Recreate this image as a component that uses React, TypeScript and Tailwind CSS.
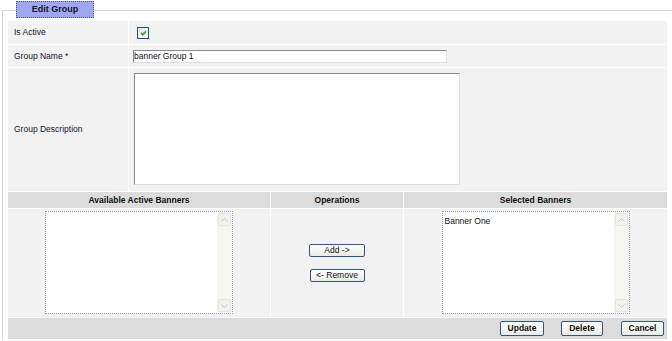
import React from "react";

const font = { fontFamily: '"Liberation Sans", Arial, sans-serif' };

function Arrow({ dir }: { dir: "up" | "down" }) {
  return (
    <div className="w-[13px] h-[13px] rounded-[2px] border border-[#e6e4dc] bg-[#f3f2ec] flex items-center justify-center">
      <svg width="7" height="4" viewBox="0 0 7 4">
        <polyline
          points={dir === "up" ? "0.5,3.5 3.5,0.5 6.5,3.5" : "0.5,0.5 3.5,3.5 6.5,0.5"}
          fill="none"
          stroke="#c9c7bd"
          strokeWidth="1"
        />
      </svg>
    </div>
  );
}

function ListBox({ items }: { items: string[] }) {
  return (
    <div className="w-[188px] h-[103px] border border-dotted border-[#8fa7c4] bg-white flex">
      <div className="flex-1 pl-[2px] pt-[3px] text-[8.5px] text-[#111]">
        {items.map((it) => (
          <div key={it}>{it}</div>
        ))}
      </div>
      <div className="w-[15px] bg-[#f6f5f0] flex flex-col justify-between items-center py-px">
        <Arrow dir="up" />
        <Arrow dir="down" />
      </div>
    </div>
  );
}

function Btn({ label, w, bold }: { label: string; w: string; bold?: boolean }) {
  return (
    <button
      className={`${w} ${bold ? "h-[15px] font-bold" : "h-[13px]"} rounded-[2px] border border-[#37577a] bg-gradient-to-b from-white to-[#eceae4] text-[8.5px] leading-none text-[#111] flex items-center justify-center`}
    >
      {label}
    </button>
  );
}

export default function App() {
  return (
    <div className="w-[672px] h-[341px] bg-white overflow-hidden text-[#14142a]" style={font}>
      {/* tab */}
      <div className="relative z-10 ml-[16px] mt-[1px] w-[78px] h-[17px] bg-[#9fa7ef] border border-dotted border-[#55588a] flex items-center justify-center text-[9px] font-bold text-[#14142a]">
        Edit Group
      </div>

      <div className="ml-[2px] -mt-[8px] border-l border-t border-[#d6d6d6] pl-[5px] pt-[10px] pr-[5px] h-[330px]">
        <div className="flex flex-col gap-px">
          <div className="grid grid-cols-[120px_1fr] gap-px h-[23px]">
            <div className="bg-[#f2f2f2] flex items-center pl-[6px] text-[8.5px]">Is Active</div>
            <div className="bg-[#f2f2f2] flex items-center pl-[8px]">
              <div className="w-[12px] h-[12px] border border-[#1c5180] bg-gradient-to-br from-[#e4e4dc] to-white flex items-center justify-center">
                <svg width="7" height="6" viewBox="0 0 7 6">
                  <polyline points="1,3 2.8,4.8 6,1.2" fill="none" stroke="#21a121" strokeWidth="1.6" />
                </svg>
              </div>
            </div>
          </div>

          <div className="grid grid-cols-[120px_1fr] gap-px h-[22px]">
            <div className="bg-[#f2f2f2] flex items-center pl-[6px] text-[8.5px]">Group Name *</div>
            <div className="bg-[#f2f2f2] flex items-center pl-[4px]">
              <div className="w-[314px] h-[13px] bg-white border border-t-[#8a8a8a] border-l-[#8a8a8a] border-b-[#dedede] border-r-[#dedede] text-[8.5px] leading-[11px] text-[#111]">
                banner Group 1
              </div>
            </div>
          </div>

          <div className="grid grid-cols-[120px_1fr] gap-px h-[123px]">
            <div className="bg-[#f2f2f2] flex items-center pl-[6px] text-[8.5px]">Group Description</div>
            <div className="bg-[#f2f2f2] pl-[5px] pt-[5px]">
              <div className="w-[326px] h-[112px] bg-white border border-t-[#8a8a8a] border-l-[#8a8a8a] border-b-[#dedede] border-r-[#dedede]" />
            </div>
          </div>

          <div className="grid grid-cols-[262px_132px_263px] gap-px">
            <div className="bg-[#dcdcdc] h-[16px] flex items-center justify-center text-[8.5px] font-bold text-[#111]">
              Available Active Banners
            </div>
            <div className="bg-[#dcdcdc] h-[16px] flex items-center justify-center text-[8.5px] font-bold text-[#111]">
              Operations
            </div>
            <div className="bg-[#dcdcdc] h-[16px] flex items-center justify-center text-[8.5px] font-bold text-[#111]">
              Selected Banners
            </div>

            <div className="bg-[#f2f2f2] h-[108px] flex justify-center pt-[2px]">
              <ListBox items={[]} />
            </div>
            <div className="bg-[#f2f2f2] h-[108px] flex flex-col items-center justify-center gap-[12px]">
              <Btn label="Add  ->" w="w-[56px]" />
              <Btn label="<- Remove" w="w-[55px]" />
            </div>
            <div className="bg-[#f2f2f2] h-[108px] flex justify-center pt-[2px]">
              <ListBox items={["Banner One"]} />
            </div>
          </div>

          <div className="bg-[#dcdcdc] h-[21px] flex items-center justify-end pr-[3px]">
            <Btn label="Update" w="w-[44px]" bold />
            <div className="w-[17px]" />
            <Btn label="Delete" w="w-[42px]" bold />
            <div className="w-[18px]" />
            <Btn label="Cancel" w="w-[43px]" bold />
          </div>
        </div>
      </div>
    </div>
  );
}
